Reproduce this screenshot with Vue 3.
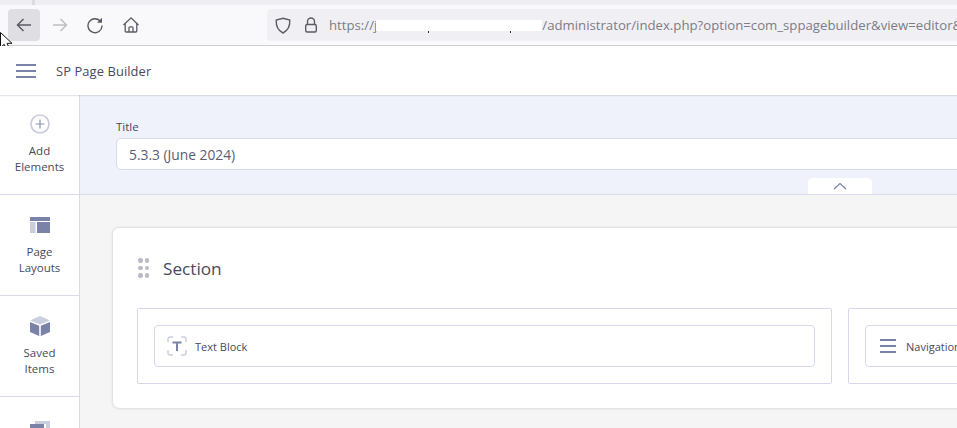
<script setup>
const sideItems = [
  { id: 'add', label: ['Add', 'Elements'] },
  { id: 'layouts', label: ['Page', 'Layouts'] },
  { id: 'saved', label: ['Saved', 'Items'] },
  { id: 'media', label: [] },
]
</script>

<template>
  <div class="page">
    <div class="tabstrip"><span class="tabsep"></span></div>
    <div class="toolbar">
      <button class="navbtn active">
        <svg width="18" height="18" viewBox="0 0 18 18" fill="none" stroke="#5b5b66" stroke-width="1.5"><path d="M16 9H2.5M8.5 3 2.5 9l6 6"/></svg>
      </button>
      <button class="navbtn">
        <svg width="18" height="18" viewBox="0 0 18 18" fill="none" stroke="#bdbdc4" stroke-width="1.5"><path d="M2 9h13.5M9.5 3l6 6-6 6"/></svg>
      </button>
      <button class="navbtn">
        <svg width="18" height="18" viewBox="0 0 18 18" fill="none" stroke="#5b5b66" stroke-width="1.4"><path d="M14.6 5.5A7 7 0 1 0 16 9.5"/><path d="M16 1.8V6.8H11Z" fill="#5b5b66" stroke="none"/></svg>
      </button>
      <button class="navbtn">
        <svg width="18" height="18" viewBox="0 0 18 18" fill="none" stroke="#5b5b66" stroke-width="1.3"><path d="M1.5 9 9 1.8 16.5 9M3.2 7.6V15a1 1 0 0 0 1 1h9.6a1 1 0 0 0 1-1V7.6M7 16v-4.2a1 1 0 0 1 1-1h2a1 1 0 0 1 1 1V16"/></svg>
      </button>
      <div class="urlbar">
        <svg class="shield" width="16" height="17" viewBox="0 0 16 17" fill="none" stroke="#5b5b66" stroke-width="1.4"><path d="M8 1.2 14.8 3c.3 6.200-1.800 10.500-6.800 13C3 13.500.9 9.200 1.200 3Z"/></svg>
        <svg class="lock" width="14" height="16" viewBox="0 0 14 16" fill="none" stroke="#5b5b66" stroke-width="1.4"><path d="M3.500 7.500V4.500a3.500 3.500 0 0 1 7 0v3"/><rect x="1.700" y="7.500" width="10.600" height="7.500" rx="1.500"/></svg>
        <span class="url">https://j</span>
        <span class="redacted"><i class="tick t1"></i><i class="tick t2"></i></span>
        <span class="url">/administrator/index.php?option=com_sppagebuilder&amp;view=editor&amp;</span>
      </div>
    </div>

    <header class="appbar">
      <span class="burger"><i></i><i></i><i></i></span>
      <span class="apptitle">SP Page Builder</span>
    </header>

    <div class="body">
      <aside class="sidebar">
        <div v-for="item in sideItems" :key="item.id" class="sideitem">
          <svg v-if="item.id === 'add'" width="20" height="20" viewBox="0 0 20 20" fill="none"><circle cx="10" cy="10" r="9" stroke="#c9cbdb" stroke-width="1.700"/><path d="M10 5.500v9M5.500 10h9" stroke="#8d93b0" stroke-width="1.200"/></svg>
          <svg v-else-if="item.id === 'layouts'" width="20" height="16" viewBox="0 0 20 16"><rect width="20" height="4" fill="#7a82a8"/><rect y="5" width="5.500" height="11" fill="#c9cede"/><rect x="7" y="5" width="13" height="11" fill="#7a82a8"/></svg>
          <svg v-else-if="item.id === 'saved'" width="20" height="20" viewBox="0 0 20 20"><path d="M10 0 20 4.500 10 8.500 0 4.500Z" fill="#c9cede"/><path d="M0 6 9.200 9.800V20L0 16ZM20 6 10.800 9.800V20L20 16Z" fill="#7a82a8"/></svg>
          <svg v-else width="20" height="14" viewBox="0 0 20 14"><rect y="3" width="14" height="11" fill="#7a82a8"/><rect x="5" width="15" height="3" fill="#c9cede"/><rect x="16" y="3" width="4" height="8" fill="#c9cede"/></svg>
          <p v-if="item.label.length" class="sidelabel"><span v-for="l in item.label" :key="l">{{ l }}</span></p>
        </div>
      </aside>

      <main class="content">
        <section class="titlepanel">
          <label class="fieldlabel">Title</label>
          <div class="input">5.3.3 (June 2024)</div>
          <div class="collapse">
            <svg width="14" height="8" viewBox="0 0 14 8" fill="none" stroke="#7a82a8" stroke-width="1.200"><path d="M1 7l6-5.500L13 7"/></svg>
          </div>
        </section>

        <div class="canvas">
          <div class="card">
            <div class="cardhead">
              <span class="grip"><i></i><i></i><i></i><i></i><i></i><i></i></span>
              <h2>Section</h2>
            </div>
            <div class="columns">
              <div class="column first">
                <div class="block">
                  <svg width="20" height="20" viewBox="0 0 20 20" fill="none">
                    <path d="M1 6V3a2 2 0 0 1 2-2h3M14 1h3a2 2 0 0 1 2 2v3M19 14v3a2 2 0 0 1-2 2h-3M6 19H3a2 2 0 0 1-2-2v-3" stroke="#c9cede" stroke-width="1.400"/>
                    <path d="M5.500 6.500h9M10 6.500V15" stroke="#7a82a8" stroke-width="2"/>
                  </svg>
                  <span>Text Block</span>
                </div>
              </div>
              <div class="column second">
                <div class="block nav">
                  <span class="navicon"><i></i><i></i><i></i></span>
                  <span>Navigation</span>
                </div>
              </div>
            </div>
          </div>
        </div>
      </main>
    </div>

    <svg class="cursor" width="14" height="20" viewBox="0 0 14 20"><path d="M.5.500V15.500l3.700-3.200 2.600 6.400 2.900-1.200-2.600-6.200H12Z" fill="#fff" stroke="#111" stroke-width="1"/></svg>
  </div>
</template>

<style>
html, body { margin: 0; padding: 0; overflow: hidden; }
</style>

<style scoped>
.page {
  position: relative;
  width: 957px;
  height: 428px;
  overflow: hidden;
  background: #f5f5f5;
  font-family: "Open Sans", "Noto Sans", sans-serif;
  color: #474a5e;
}
.tabstrip { height: 5px; background: #eeeef3; }
.tabsep { display: block; width: 3px; height: 5px; margin-left: 32px; background: #dcdce0; }
.toolbar {
  box-sizing: border-box;
  display: flex;
  align-items: center;
  padding: 4px 0 4px 8px;
  background: #f9f9fb;
  border-bottom: 1px solid #cfcfd2;
  height: 41px;
}
.navbtn {
  width: 32px;
  height: 32px;
  flex: none;
  margin-right: 3.500px;
  padding: 0;
  border: 0;
  border-radius: 4px;
  background: transparent;
  display: flex;
  align-items: center;
  justify-content: center;
}
.navbtn.active { background: #dedee3; }
.urlbar {
  flex: none;
  width: 760px;
  height: 32px;
  margin-left: 117px;
  display: flex;
  align-items: center;
  background: #f0f0f4;
  border-radius: 4px;
  white-space: nowrap;
  overflow: hidden;
}
.shield { margin-left: 8px; flex: none; }
.lock { margin-left: 13px; flex: none; }
.url { font-size: 13.200px; color: #7c7c84; }
.lock + .url { margin-left: 11px; }
.redacted { position: relative; width: 166px; height: 11px; background: #fff; flex: none; margin-left: -1px; }
.tick { position: absolute; top: 11px; width: 1px; height: 2px; background: #333; }
.t1 { left: 52px; }
.t2 { left: 134px; }
.appbar {
  height: 49px;
  display: flex;
  align-items: center;
  background: #fff;
  padding-left: 16px;
  box-shadow: 0 1px 1px rgba(80, 85, 120, 0.15);
  position: relative;
  z-index: 1;
}
.burger { display: flex; flex-direction: column; gap: 4px; width: 20px; }
.burger i { display: block; height: 2px; background: #7a82a8; }
.apptitle { margin-left: 20px; font-size: 12.900px; letter-spacing: 0.1px; }
.body { display: flex; }
.sidebar {
  width: 80px;
  flex: none;
  box-sizing: border-box;
  background: #fff;
  border-right: 1px solid #d8dbeb;
}
.sideitem {
  height: 101px;
  box-sizing: border-box;
  border-bottom: 1px solid #d8dbeb;
  padding-top: 19px;
  display: flex;
  flex-direction: column;
  align-items: center;
}
.sideitem:first-child { height: 100px; }
.sideitem:nth-child(2) { padding-top: 22px; }
.sideitem:nth-child(2) .sidelabel { margin-top: 11px; }
.sideitem:nth-child(3) { padding-top: 20px; }
.sideitem:last-child { border-bottom: 0; padding-top: 24px; }
.sidelabel {
  margin: 9px 0 0;
  display: flex;
  flex-direction: column;
  align-items: center;
  font-size: 11.500px;
  line-height: 16px;
}
.content { flex: none; width: 1100px; }
.titlepanel {
  position: relative;
  height: 100px;
  box-sizing: border-box;
  padding: 25px 36px 0;
  background: #eff2fb;
  border-bottom: 1px solid #d8dbeb;
}
.fieldlabel { display: block; font-size: 11.500px; line-height: 14px; }
.input {
  margin-top: 4px;
  width: 1000px;
  height: 32px;
  box-sizing: border-box;
  padding-left: 12px;
  line-height: 31px;
  font-size: 13.800px;
  color: #5a5d75;
  background: #fff;
  border: 1px solid #d8dbeb;
  border-radius: 5px;
}
.collapse {
  position: absolute;
  left: 728px;
  bottom: 0;
  width: 64px;
  height: 16px;
  background: #fff;
  border-radius: 5px 5px 0 0;
  display: flex;
  align-items: center;
  justify-content: center;
}
.canvas { padding: 33px 0 0 33px; }
.card {
  width: 1000px;
  height: 180px;
  box-sizing: border-box;
  padding: 0 24px;
  background: #fff;
  border-radius: 6px;
  box-shadow: 0 0 3px rgba(60, 60, 70, 0.28);
}
.cardhead { height: 80px; display: flex; align-items: center; }
.grip { display: grid; grid-template-columns: 4.500px 4.500px; gap: 3px 2px; margin-left: 1px; }
.grip i { width: 4.500px; height: 4.500px; border-radius: 50%; background: #b9bac4; }
.cardhead h2 { margin: 0 0 0 14px; font-size: 17.200px; font-weight: 400; color: #474a5e; }
.columns { display: flex; gap: 16px; }
.column {
  flex: none;
  height: 76px;
  box-sizing: border-box;
  padding: 16px;
  background: #fff;
  border: 1px solid #d5d8ec;
  border-radius: 2px;
}
.first { width: 695px; }
.second { width: 300px; }
.block {
  height: 42px;
  box-sizing: border-box;
  display: flex;
  align-items: center;
  gap: 8px;
  padding-left: 12px;
  font-size: 11px;
  border: 1px solid #d5d8ec;
  border-radius: 4px;
}
.nav { gap: 10px; padding-left: 14px; }
.navicon { display: flex; flex-direction: column; gap: 4px; width: 16px; }
.navicon i { display: block; height: 2px; background: #7a82a8; }
.cursor { position: absolute; left: 0; top: 32px; }
</style>
